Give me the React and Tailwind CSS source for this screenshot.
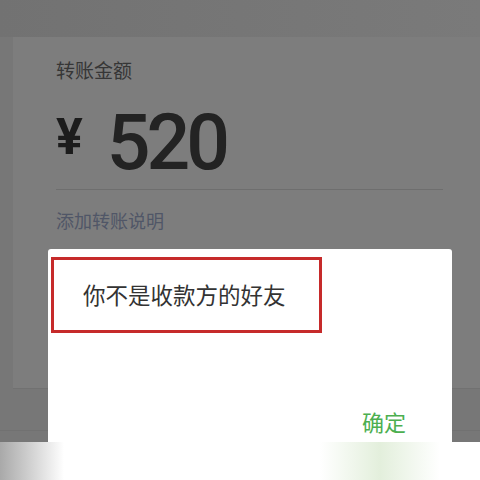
export default function App() {
  const cjk = { fontFamily: '"Noto Sans CJK SC", "Noto Sans", sans-serif' };
  return (
    <div className="w-[480px] h-[480px] overflow-hidden flex flex-col bg-white" style={cjk}>
      <div className="relative h-[442px] overflow-hidden bg-[#777777] flex flex-col">
        <div className="h-[37px] bg-gradient-to-r from-[#727272] via-[#767676] to-[#7a7a7a]" />
        <div className="ml-[13px] h-[352px] bg-[#7d7d7d] border-b border-[#717171] flex flex-col pl-[43px] pr-[37px] pt-[20px]">
          <div className="text-[19px] leading-[26px] text-[#363636]">转账金额</div>
          <div className="flex items-end mt-[33px] h-[66px]">
            <span className="text-[50px] leading-none font-bold text-[#1c1c1c] mb-[20px]" style={{ fontFamily: "Roboto, sans-serif" }}>¥</span>
            <span className="ml-[24px] text-[77px] leading-none font-medium text-[#232323] tracking-[-4px]" style={{ fontFamily: "Roboto, sans-serif" }}>520</span>
          </div>
          <div className="mt-[7px] h-px bg-[#6e6e6e]" />
          <div className="mt-[17px] text-[18px] leading-[26px] text-[#505667]">添加转账说明</div>
        </div>
        <div className="h-[42px] border-b border-[#717171]" />

        <div className="absolute left-[48px] top-[249px] w-[404px] h-[240px] bg-white rounded-[3px] flex flex-col">
          <div className="mt-[8px] ml-[3px] w-[271px] h-[76px] border-[3px] border-[#c62a2a] flex items-center pl-[29px]">
            <span className="text-[22.5px] text-[#333333]">你不是收款方的好友</span>
          </div>
          <div className="flex justify-end pr-[46px] mt-[72px]">
            <span className="text-[22px] text-[#4caf50]">确定</span>
          </div>
        </div>
      </div>
      <div className="relative h-[38px] flex">
        <div className="w-[64px] bg-gradient-to-r from-[#a9a9a9] to-white" />
        <div className="flex-1 bg-white" />
        <div className="w-[120px] bg-gradient-to-r from-white via-[#e3efdc] to-white" />
        <div className="w-[40px] bg-white" />
      </div>
    </div>
  );
}
